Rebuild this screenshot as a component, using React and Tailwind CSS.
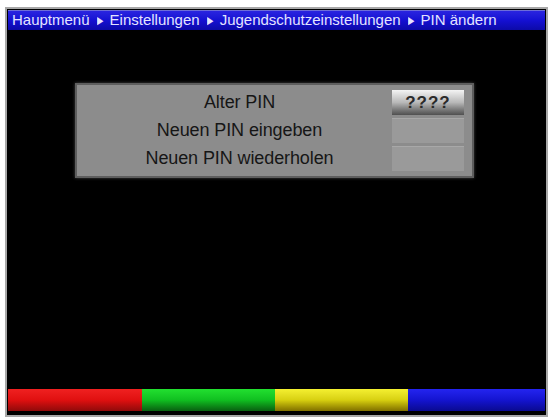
import React from 'react';

const rows = [
  { label: 'Alter PIN', value: '????', active: true },
  { label: 'Neuen PIN eingeben', value: '' },
  { label: 'Neuen PIN wiederholen', value: '' },
];

const Arrow = () => <span className="mx-[6px] text-[11px] align-[1px] scale-x-75 inline-block">▶</span>;

export default function App() {
  return (
    <div className="w-[553px] h-[420px] bg-white pt-[7px] pl-[5px] overflow-hidden" style={{ fontFamily: '"Liberation Sans", Arial, sans-serif' }}>
      <div className="w-[543px] h-[410px] border-2 border-[#a8a8a8] bg-black flex flex-col p-[1px]">
        {/* Titelzeile */}
        <div className="h-[20px] bg-gradient-to-b from-[#2a24e0] via-[#1410d2] to-[#0c0aa8] border-t border-[#6d6dd8] flex items-center pl-[4px] text-[15px] text-[#e4e4ff] whitespace-nowrap">
          Hauptmenü<Arrow />Einstellungen<Arrow />Jugendschutzeinstellungen<Arrow />PIN ändern
        </div>

        {/* PIN Dialog */}
        <div className="mt-[53px] ml-[67px] w-[399px] h-[95px] bg-[#8c8c8c] border-2 border-[#5e5e5e] flex flex-col justify-center gap-[2px] py-[4px] pr-[8px] shadow-[0_0_3px_#444]">
          {rows.map((r) => (
            <div key={r.label} className="flex items-center h-[26px]">
              <div className="flex-1 text-center text-[18px] text-[#161616] pl-[10px] tracking-[-0.1px]">{r.label}</div>
              <div
                className={
                  r.active
                    ? 'w-[72px] h-[25px] bg-gradient-to-b from-[#f4f4f4] via-[#b8b8b8] to-[#505050] flex items-center justify-center text-[17px] text-[#2a2a2a] font-bold tracking-[1px]'
                    : 'w-[72px] h-[25px] bg-[#9a9a9a] border-t border-[#a8a8a8]'
                }
              >
                {r.value}
              </div>
            </div>
          ))}
        </div>

        <div className="flex-1" />

        {/* Farbtasten */}
        <div className="h-[22px] flex">
          <div className="w-[134px] bg-gradient-to-b from-[#f02020] via-[#e01010] to-[#900a0a]" />
          <div className="w-[133px] bg-gradient-to-b from-[#22e030] via-[#10c020] to-[#086010]" />
          <div className="w-[133px] bg-gradient-to-b from-[#f4f030] via-[#d8d010] to-[#807000]" />
          <div className="flex-1 bg-gradient-to-b from-[#2424f0] via-[#1414d0] to-[#0a0a90]" />
        </div>
        <div className="h-[3px]" />
      </div>
    </div>
  );
}
